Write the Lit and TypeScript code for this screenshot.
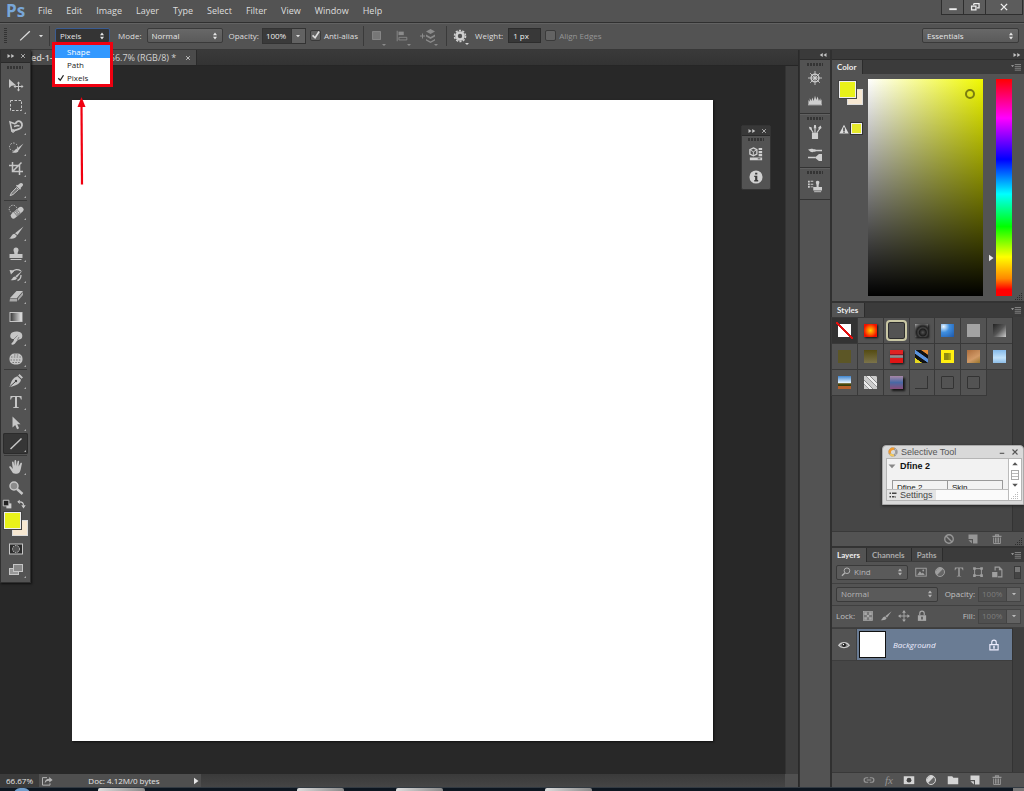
import { LitElement, html, svg, css, TemplateResult, nothing } from "lit";
import { customElement, state } from "lit/decorators.js";
import { classMap } from "lit/directives/class-map.js";

/* Glyphs share a 16x16 grid and take their colour from the text colour. */
const glyphs: Record<string, unknown> = {
  move: svg`<path d="M1 2v9l2.600-2.300L8 8.300z" fill="currentColor"/><path d="M10.500 5.500v8M6.500 9.500h8" stroke="currentColor"/><path d="M10.500 4.500l1.700 2H8.800zM10.500 14.500l1.700-2H8.800zM5.500 9.500l2-1.700v3.400zM15.500 9.500l-2-1.700v3.400z" fill="currentColor"/>`,
  marquee: svg`<rect x="2.500" y="2.500" width="11" height="10" fill="none" stroke="currentColor" stroke-dasharray="2.500 1.500"/>`,
  lasso: svg`<path d="M4 12.500L2 3l5.500 2" fill="none" stroke="currentColor" stroke-width="1.500"/><path d="M7.500 5C8 2 11 1.500 12.800 3c2 1.800 1.500 5-.8 6.500-2.500 1.600-5.500 1-8 3" fill="none" stroke="currentColor" stroke-width="1.800"/><path d="M6 7.500l3.500-1 2 .5" fill="none" stroke="currentColor" stroke-width="1.500"/><path d="M3.500 11c2-1.500 4 .8 2.500 2-1.200.8-2.500.3-2.500-2z" fill="none" stroke="currentColor"/>`,
  quick: svg`<circle cx="5.500" cy="7" r="4" fill="none" stroke="currentColor" stroke-dasharray="1.500 1.500"/><path d="M15.500 3.500l-5 7-2-1.500z" fill="currentColor"/><path d="M9 9l1.500 1.800c-.5 2-3.500 2.500-6.500 1.700C6.500 11.500 6.500 9 9 9z" fill="currentColor"/>`,
  crop: svg`<path d="M4.500 1v9.500H15M1 4.500h10.500V14M5 10l8.500-8.500" fill="none" stroke="currentColor" stroke-width="1.500"/>`,
  dropper: svg`<path d="M14.500 1.500c1 1 .5 2-.5 3L12.500 6l.5.800-1 .9-4-4 .9-.9.8.5 1.500-1.400c1-1 2.300-1.400 3.300-.4z" fill="currentColor"/><path d="M8.500 5.500l2 2-5.500 5-2.800 1.200L3.300 11z" fill="#777" stroke="currentColor"/>`,
  heal: svg`<circle cx="5" cy="5" r="3.800" fill="none" stroke="currentColor" stroke-dasharray="1.300 1.300"/><g transform="rotate(-40 9 8.500)"><rect x="1.500" y="6" width="15" height="5.500" rx="2.500" fill="currentColor"/><rect x="6.500" y="6" width="5" height="5.500" fill="#8d8d8d"/><path d="M7.500 7.500h1M9.500 7.500h1M7.500 9.500h1M9.500 9.500h1" stroke="#ddd"/></g>`,
  brush: svg`<path d="M15.500 1.500L9.500 10 7 8.200z" fill="currentColor"/><path d="M6.500 8.800l2.300 1.900c-.8 2.700-4 3.300-7.800 2.800 2.500-.7 2.300-4.500 5.500-4.700z" fill="currentColor"/>`,
  stamp: svg`<path d="M8 1.500a2.500 2.500 0 0 1 2.500 2.500c0 1.500-1 2-.8 4h4.800v4h-13V8h4.800c.2-2-.8-2.500-.8-4A2.500 2.500 0 0 1 8 1.500z" fill="currentColor"/><path d="M2.500 13.500h11" stroke="currentColor"/>`,
  history: svg`<path d="M14.500 3.500L9 10.500 7.300 9.200z" fill="currentColor"/><path d="M7 9.500l2 1.500c-.8 2-3 2.500-6.500 2 2.200-.6 2-3.500 4.500-3.500z" fill="currentColor"/><path d="M4 5.500c2-3.500 6-3.500 9-1.500M13 8c0 3-1.500 5-3.500 5.500" fill="none" stroke="currentColor" stroke-width="1.300"/><path d="M1.500 3l5 .5L3 7.500z" fill="currentColor"/>`,
  eraser: svg`<path d="M8.500 3H15l-6 7H2z" fill="currentColor"/><path d="M2 10.500h7v3H1.500zM9.800 10.500L15 4v3l-5.200 6z" fill="#a8a8a8"/>`,
  gradient: svg`<defs><linearGradient id="tool-fade"><stop offset="0" stop-color="#333"/><stop offset="1" stop-color="#eee"/></linearGradient></defs><rect x="2" y="3.500" width="12" height="9" fill="url(#tool-fade)" stroke="currentColor"/>`,
  smudge: svg`<path d="M2.500 4.500C3.500 2 7 1.200 10.500 1.800c3.200.6 4.500 3 3.500 6-.8 2-2.500 1.500-4 2.200-1.800 1.200-2 3.500-5 4.700-1.500.4-2.200-.7-1.200-1.700C5.500 11.500 6 10.500 6 9 3.500 9.500 1.500 7.500 2.500 4.500z" fill="currentColor"/><path d="M6 9l3.500-3.500M9.500 10l1.500-3" stroke="#888"/>`,
  sponge: svg`<rect x="1.500" y="2.500" width="13" height="11" rx="5" fill="currentColor"/><path d="M3 6h10M2.500 9h11M4.500 11.500h8M6 4h5" stroke="#777" stroke-dasharray="1.500 1.300"/>`,
  pen: svg`<path d="M11.500 1L15 4.500l-1.500 1.300-3.300-3.300z" fill="currentColor"/><path d="M9.500 3.200l3.500 3.500c-1 4-4 5.500-11.500 7.300C3 9 4.500 4.500 9.500 3.200z" fill="currentColor"/><path d="M2 13.500l5.500-5" stroke="#444"/><circle cx="8" cy="8" r="1.200" fill="#444"/>`,
  type: svg`<path d="M2.500 2h11l.3 3.500h-1C12.500 3.500 12 3 9 3v9.500c0 .5.500.8 2 1v.5H5v-.5c1.500-.2 2-.5 2-1V3C4 3 3.500 3.500 3.200 5.500h-1z" fill="currentColor"/>`,
  select: svg`<path d="M4.500 1.500v11l2.700-2.400 1.900 4.100 2-1-1.900-3.900h3.300z" fill="currentColor"/>`,
  line: svg`<path d="M2.500 13L13.500 2.500" stroke="currentColor" stroke-width="1.500"/>`,
  hand: svg`<path d="M4.500 8L4 3.500c0-1.300 1.500-1.300 1.700 0L6.300 7 6.500 2c0-1.300 1.700-1.300 1.700 0L8.500 7l1-4.500c.3-1.200 1.800-.9 1.600.3L10.600 7.500l1.800-3.200c.7-1 1.900-.4 1.500.7-1 3-1 9-4 9.500-3.500.6-5 .2-6-2L1.300 8.500C1 7.300 2 7 2.800 7.600L5 10z" fill="currentColor"/>`,
  zoom: svg`<circle cx="6" cy="6" r="4" fill="#8b8b8b" stroke="currentColor" stroke-width="1.500"/><path d="M9 9l5.500 5" stroke="currentColor" stroke-width="2.500"/>`,
  mask: svg`<rect x="1.500" y="3" width="13" height="10" fill="#2b2b2b" stroke="currentColor"/><circle cx="8" cy="8" r="3.500" fill="#555" stroke="currentColor" stroke-dasharray="1.500 1"/>`,
  screens: svg`<rect x="1.500" y="6.500" width="9" height="6" fill="#999" stroke="currentColor"/><rect x="5.500" y="2.500" width="9" height="7" fill="#888" stroke="currentColor"/>`,
  defaults: svg`<path d="M7 7h8v8H7z" fill="currentColor"/><path d="M2 2h9v9H2z" fill="#222" stroke="currentColor" stroke-width="1.500"/>`,
  swap: svg`<path d="M6 4.500c4 0 6 1.500 6 6" fill="none" stroke="currentColor" stroke-width="1.800"/><path d="M6 1v7L2 4.500zM8.500 10h7L12 15z" fill="currentColor"/>`,
  square: svg`<rect x="3" y="3" width="9" height="9" fill="#777" stroke="#8b8b8b"/>`,
  align: svg`<path d="M2.500 2v12" stroke="currentColor"/><path d="M4 3h6v4H4z" fill="currentColor"/><path d="M4.500 9.500h9v3h-9z" fill="none" stroke="currentColor"/>`,
  arrange: svg`<path d="M0 8h5M2.500 5.500v5" stroke="currentColor"/><path d="M10.500 1L15 3.500 10.500 6 6 3.500zM6 6.500L10.500 9 15 6.500v2L10.500 11 6 8.500zM6 11l4.500 2.500L15 11v1.500L10.500 15 6 12.500z" fill="currentColor"/>`,
  gear: svg`<circle cx="8" cy="8" r="4" fill="none" stroke="currentColor" stroke-width="3"/><circle cx="8" cy="8" r="6.300" fill="none" stroke="currentColor" stroke-width="1.800" stroke-dasharray="2.400 1.558"/>`,
  wheel: svg`<path d="M8 0v16M0 8h16M2.500 2.500l11 11M13.500 2.500l-11 11" stroke="currentColor"/><circle cx="8" cy="8" r="4.500" fill="none" stroke="currentColor" stroke-width="1.500"/><circle cx="8" cy="8" r="1.800" fill="currentColor"/>`,
  histogram: svg`<path d="M.5 13V8l1.500 2V6l2 3 1-4 1.500 4L8 3l1.500 5L11 4l1.500 5L14 6l.500 3 1-2v6z" fill="currentColor"/><path d="M0 13.500h16" stroke="currentColor"/>`,
  brushes: svg`<path d="M4.500 9h7v7h-7z" fill="currentColor"/><path d="M6 9L3 4M8 9V4M10 9l3.500-5" stroke="currentColor" stroke-width="1.300"/><path d="M1 2l3 .5.500 3L2 5zM7 0h2l.5 4h-3zM11.500 3l3-2.500 1 3-2.500 2z" fill="currentColor"/>`,
  presets: svg`<path d="M8 4h8M0 12h9" stroke="currentColor" stroke-width="1.800"/><path d="M0 3c2-.5 3-1 5-1 2.500 0 2.500 4 0 4C3 6 2 4 0 3zM6.500 2.500h2v3h-2zM9 11l3.500-3H16v8h-3.500L9 13z" fill="currentColor"/>`,
  clone: svg`<path d="M0 2h2v2H0zM3 2h3v1H3zM0 5h2v2H0zM3 5.500h3v1H3zM0 8h2v2H0zM3 8.500h3v1H3z" fill="currentColor"/><path d="M11 2c1.600 0 2 1 2 2s-1 2-.8 5H16v4H6V9h3.800C10 6 9 5 9 4s.4-2 2-2z" fill="currentColor"/><path d="M7 14.500h8" stroke="currentColor"/>`,
  properties: svg`<path d="M5 1l4 2v5L5 10 1 8V3z" fill="none" stroke="currentColor" stroke-width="1.500"/><path d="M1 3l4 2.500L9 3M5 5.500V10" stroke="currentColor" fill="none"/><path d="M11 1h4v2.500h-4zM11 4.500h4V7h-4zM11 8h4v2.500h-4zM1 12h14v3H1z" fill="currentColor"/><path d="M10 13.500h3" stroke="#444"/>`,
  info: svg`<circle cx="8" cy="8" r="7.500" fill="currentColor"/><path d="M7 3h2.500v2H7zM6 6.500h3.500v5h1V13H6v-1.500h1V8H6z" fill="#3a3a3a"/>`,
  warning: svg`<path d="M8 1l7.500 14H.5z" fill="currentColor"/><path d="M8 5.500V11M8 12v2" stroke="#222" stroke-width="2"/>`,
  menu: svg`<path d="M0 5h5L2.500 8z" fill="currentColor"/><path d="M6 4h10M6 7h10M6 10h10M6 13h10" stroke="currentColor"/>`,
  ban: svg`<circle cx="8" cy="8" r="5.700" fill="none" stroke="currentColor" stroke-width="1.800"/><path d="M4 4l8 8" stroke="currentColor" stroke-width="1.800"/>`,
  page: svg`<path d="M2 2h12v12H8V8H2z" fill="currentColor"/><path d="M2 9.500h4.500V14z" fill="currentColor"/>`,
  trash: svg`<path d="M2 4.500h12M6 4V2.500h4V4" fill="none" stroke="currentColor" stroke-width="1.500"/><path d="M3.500 6v8h9V6M6 6v7M8 6v7M10 6v7" fill="none" stroke="currentColor" stroke-width="1.300"/>`,
  picture: svg`<rect x="1" y="3" width="14" height="10.500" fill="none" stroke="currentColor" stroke-width="1.300"/><path d="M3 12l3.500-5 2.500 3 1.500-1.500L13 12z" fill="currentColor"/><circle cx="11" cy="6" r="1.200" fill="currentColor"/>`,
  adjust: svg`<circle cx="8" cy="8" r="6" fill="#666" stroke="currentColor" stroke-width="1.300"/><path d="M12.200 3.800A6 6 0 0 0 3.800 12.200z" fill="currentColor"/>`,
  shape: svg`<path d="M3.500 3.500h9v9h-9z" fill="none" stroke="currentColor" stroke-width="1.300"/><path d="M1.500 1.500h3.500v3.500H1.500zM11 1.500h3.500v3.500H11zM1.500 11h3.500v3.500H1.500zM11 11h3.500v3.500H11z" fill="currentColor"/>`,
  smart: svg`<path d="M5.500 6V1.500H11l3.500 3.500v9.500H9" fill="none" stroke="currentColor" stroke-width="1.500"/><path d="M10.500 1.500V5.500h4zM1.500 8h7v7h-7z" fill="currentColor"/>`,
  search: svg`<circle cx="9.500" cy="6" r="4.500" fill="none" stroke="currentColor" stroke-width="1.500"/><path d="M6 9.500L1.500 14" stroke="currentColor" stroke-width="2"/>`,
  checker: svg`<rect x="2" y="2" width="12" height="12" fill="#777" stroke="currentColor"/><path d="M3 3h3.500v3.500H3zM9.500 3H13v3.500H9.500zM6.500 6.500h3v3h-3zM3 9.500h3.500V13H3zM9.500 9.500H13V13H9.500z" fill="currentColor"/>`,
  cross: svg`<path d="M8 2v12M2 8h12" stroke="currentColor" stroke-width="1.200"/><path d="M8 0l2.500 3.500h-5zM8 16l2.500-3.500h-5zM0 8l3.500-2.500v5zM16 8l-3.500-2.500v5z" fill="currentColor"/>`,
  lock: svg`<path d="M5 7V4.500a3 3 0 0 1 6 0V7" fill="none" stroke="currentColor" stroke-width="1.500"/><path d="M2.500 7h11v7.500h-11z" fill="currentColor"/><path d="M8 9v3.500" stroke="#444" stroke-width="1.800"/>`,
  lockLine: svg`<path d="M5 7V4.500a3 3 0 0 1 6 0V7" fill="none" stroke="currentColor" stroke-width="1.500"/><path d="M2.500 7.500h11v7h-11z" fill="none" stroke="currentColor" stroke-width="1.500"/><path d="M8 9v4" stroke="currentColor" stroke-width="2"/>`,
  eye: svg`<path d="M1 8.500C4 3.500 12 3.500 15 8.500c-3 4-11 4-14 0z" fill="#777" stroke="currentColor" stroke-width="1.600"/><circle cx="8" cy="8" r="2.700" fill="#222"/><circle cx="7.300" cy="7.300" r=".9" fill="#fff"/>`,
  link: svg`<path d="M7 5H4.500a3 3 0 0 0 0 6H7M9 5h2.500a3 3 0 0 1 0 6H9M5 8h6" fill="none" stroke="currentColor" stroke-width="1.600"/>`,
  addMask: svg`<path d="M1 3h14v10.500H1z" fill="currentColor"/><circle cx="8" cy="8.200" r="3.200" fill="#444"/>`,
  folder: svg`<path d="M1 3h6l1.500 2H15v8.500H1z" fill="currentColor"/>`,
  share: svg`<path d="M8 3.500H2v10h10V11" fill="none" stroke="currentColor" stroke-width="1.300"/><path d="M5 11c0-4 2-6 6-6V2.500L15.500 6.500 11 10V7.500C8 7.500 6.500 8.500 5 11z" fill="currentColor"/>`,
  forward: svg`<path d="M1 4l6 4-6 4zM8.500 4l6 4-6 4z" fill="currentColor"/>`,
  back: svg`<path d="M7.500 4l-6 4 6 4zM15 4L9 8l6 4z" fill="currentColor"/>`,
  close: svg`<path d="M3 3l10 10M13 3L3 13" stroke="currentColor" stroke-width="2.200"/>`,
  minimize: svg`<path d="M2 10h12v3H2z" fill="currentColor"/>`,
  restore: svg`<path d="M6 2.500h8.500v7H11M6 5V2.500" fill="none" stroke="currentColor" stroke-width="2"/><path d="M2.500 6.500h7v6h-7z" fill="none" stroke="currentColor" stroke-width="2"/>`,
  updown: svg`<path d="M8 1l4 5.500H4zM8 15l4-5.500H4z" fill="currentColor"/>`,
  down: svg`<path d="M2.500 5.500h11L8 11.500z" fill="currentColor"/>`,
  up: svg`<path d="M2.500 10.500h11L8 4.500z" fill="currentColor"/>`,
  play: svg`<path d="M4 1.500l9 6.500-9 6.500z" fill="currentColor"/>`,
  check: svg`<path d="M2.500 8.500l4 4L13 2.500" fill="none" stroke="currentColor" stroke-width="2.600"/>`,
  resize: svg`<path d="M12 2h2v2h-2zM8 6h2v2H8zM12 6h2v2h-2zM4 10h2v2H4zM8 10h2v2H8zM12 10h2v2h-2zM0 14h2v2H0zM4 14h2v2H4zM8 14h2v2H8zM12 14h2v2h-2z" fill="currentColor"/>`,
  list: svg`<path d="M1 3h3v3H1zM1 10h3v3H1zM6 3h9v3H6zM6 10h5v3H6zM12 11h2v2h-2z" fill="currentColor"/>`,
  ring: svg`<circle cx="8" cy="8" r="5.500" fill="none" stroke="#9a9a9a" stroke-width="4" stroke-dasharray="3.500 .8"/><path d="M3 10a5.500 5.500 0 0 1 7-7" fill="none" stroke="#f29a2e" stroke-width="4"/><path d="M3.500 11a5.500 5.500 0 0 0 6 2.300" fill="none" stroke="#f5c95a" stroke-width="3.500"/>`,
};

const icon = (name: string, size = "s12"): TemplateResult =>
  html`<svg class="icon ${size}" viewBox="0 0 16 16" aria-hidden="true">${glyphs[name]}</svg>`;

const menus = ["File", "Edit", "Image", "Layer", "Type", "Select", "Filter", "View", "Window", "Help"];

const toolGroups: [string, string][][] = [
  [["move", "Move"], ["marquee", "Marquee"], ["lasso", "Lasso"], ["quick", "Quick selection"], ["crop", "Crop"], ["dropper", "Eyedropper"]],
  [["heal", "Healing brush"], ["brush", "Brush"], ["stamp", "Clone stamp"], ["history", "History brush"], ["eraser", "Eraser"], ["gradient", "Gradient"], ["smudge", "Smudge"], ["sponge", "Sponge"]],
  [["pen", "Pen"], ["type", "Type"], ["select", "Path selection"], ["line", "Line"]],
  [["hand", "Hand"], ["zoom", "Zoom"]],
];

const dockGroups: [string, string][][] = [
  [["wheel", "Navigator"], ["histogram", "Histogram"]],
  [["brushes", "Brush presets"], ["presets", "Brush"]],
  [["clone", "Clone source"]],
];

const styleNames = [
  "none", "sun", "ring", "chrome", "glass", "flat", "steel",
  "moss", "olive", "ruby", "camo", "gold", "copper", "sky",
  "scene", "static", "dusk", "plain", "frame", "frame",
];

@customElement("app-root")
export class AppRoot extends LitElement {
  static styles = css`
    :host { display: flex; flex-direction: column; height: 100vh; overflow: hidden; position: relative;
      background: #535353; color: #dedede; font: 8px/12px "Open Sans", "Noto Sans", sans-serif; }
    * { box-sizing: border-box; }
    button, input, select { font: inherit; color: inherit; background: none; border: 0; padding: 0; margin: 0; border-radius: 0; }
    button { display: flex; align-items: center; justify-content: center; }
    .icon { display: block; flex: none; overflow: visible; }
    .s6 { width: 6px; height: 6px; } .s8 { width: 8px; height: 8px; } .s10 { width: 10px; height: 10px; }
    .s12 { width: 12px; height: 12px; } .s14 { width: 14px; height: 14px; } .s16 { width: 16px; height: 16px; }

    .menubar { display: flex; align-items: center; height: 23px; flex: none; border-bottom: 1px solid #303030; padding-left: 6px; font-size: 9px; }
    .logo { font: 700 17px/22px "Open Sans", sans-serif; color: #78a6d8; width: 26px; }
    .menubar nav { display: flex; gap: 14px; padding-left: 6px; flex: 1; }
    .window-buttons { display: flex; align-self: flex-start; height: 15px; border: 1px solid #2e2e2e; border-top: 0; margin-right: 1px; color: #eee; background: #5c5c5c; }
    .window-buttons button { width: 22px; border-right: 1px solid #2e2e2e; }
    .window-buttons button:last-child { width: 36px; border: 0; }

    .options { display: flex; align-items: center; height: 27px; flex: none; border-top: 1px solid #626262; border-bottom: 1px solid #383838; padding: 0 5px 2px 4px; }
    .v-grip { width: 3px; height: 16px; margin-right: 11px; background: repeating-linear-gradient(#333 0 1px, #535353 1px 2px); }
    .rule { width: 1px; height: 20px; background: #3a3a3a; margin: 0 5px; }
    .tool-preset { gap: 6px; width: 26px; }
    .combo { display: flex; align-items: center; height: 15px; padding: 0 3px 0 4px; border: 1px solid #3a3a3a; border-radius: 2px; background: linear-gradient(#686868, #5a5a5a); color: #e6e6e6; }
    .combo select { appearance: none; flex: 1; min-width: 0; outline: none; line-height: 12px; }
    .combo .icon { pointer-events: none; }
    .combo.focused { background: #343434; border-color: #3b5c91; width: 55px; margin-right: 8px; }
    .mode-combo { width: 76px; margin: 0 6px 0 5px; }
    .number { display: flex; height: 16px; border: 1px solid #333; margin-left: 3px; }
    .number input { width: 28px; background: #3a3a3a; padding-left: 3px; outline: none; color: #eee; }
    .number button { width: 14px; background: #626262; border-left: 1px solid #333; }
    .check { display: flex; align-items: center; gap: 3px; margin-left: 4px; position: relative; }
    .check input { appearance: none; width: 11px; height: 11px; border: 1px solid #3a3a3a; border-radius: 2px; background: #636363; }
    .check .icon { position: absolute; left: 1px; top: 0; display: none; }
    .check input:checked + .icon { display: block; }
    .disabled { color: #969696; }
    .shape-actions { display: flex; gap: 11px; padding: 0 5px 0 1px; color: #8b8b8b; }
    .shape-actions button, .gear { position: relative; }
    .shape-actions button::after, .gear::after { content: ""; position: absolute; right: -2px; bottom: -2px; border: 2px solid transparent; border-top-color: currentColor; border-bottom: 0; }
    .gear { color: #d0d0d0; margin: 0 8px 0 1px; }
    .weight { width: 33px; height: 15px; background: #383838; border: 1px solid #2d2d2d; padding-left: 4px; margin-left: 5px; color: #eee; }
    .workspace-combo { width: 97px; margin-left: auto; }

    .workspace { display: flex; flex: 1; min-height: 0; position: relative; }
    .document { display: flex; flex-direction: column; flex: 1; min-width: 0; border-right: 1px solid #2a2a2a; }
    .tabs { display: flex; height: 16px; flex: none; background: linear-gradient(#3a3a3a, #333); border-bottom: 1px solid #262626; }
    .doc-tab { display: flex; align-items: center; width: 197px; background: #4b4b4b; padding: 0 5px 0 31px; font-size: 9px; color: #d2d2d2; border-right: 1px solid #2a2a2a; font-weight: 600; }
    .doc-tab span { flex: none; } .doc-tab .zoom-note { margin-left: 57px; flex: 1; font-weight: 400; white-space: nowrap; }
    .view { display: flex; flex: 1; min-height: 0; }
    .pasteboard { display: flex; flex: 1; background: #282828; padding: 34px 72px 33px; }
    .paper { flex: 1; background: #fff; box-shadow: 1px 1px 2px #111; }
    .scroll { width: 12px; flex: none; background: #3e3e3e; border-left: 1px solid #333; }
    .view .scroll { width: 13px; }
    .status { display: flex; height: 13px; flex: none; background: linear-gradient(#3a3a3a, #454545); color: #e4e4e4; align-items: stretch; }
    .status .level { width: 39px; background: #3b3b3b; padding-left: 6px; outline: none; }
    .status .doc { display: flex; align-items: center; width: 162px; background: #4f4f4f; padding: 0 1px 0 2px; }
    .status .doc > .icon { color: #b5b5b5; }
    .status .doc span { flex: 1; text-align: center; padding-left: 3px; }
    .status .corner { width: 13px; background: #505050; margin-left: auto; }

    .dock { display: flex; flex-direction: column; width: 31px; flex: none; border-left: 1px solid #303030; background: #535353; }
    .bar { display: flex; align-items: center; justify-content: flex-end; height: 10px; flex: none; background: #3a3a3a; color: #c5c5c5; padding: 0 3px; border-bottom: 1px solid #2c2c2c; }
    .dock-group { display: flex; flex-direction: column; align-items: center; gap: 8px; padding: 3px 0 6px; border-bottom: 1px solid #333; color: #cfcfcf; }
    .dock-group + .dock-group { border-top: 1px solid #606060; padding-top: 2px; }
    .grip { width: 16px; height: 3px; background: repeating-linear-gradient(90deg, #343434 0 2px, #535353 2px 3px); }
    .dock-group .grip { margin-bottom: -3px; }

    .panels { display: flex; flex-direction: column; width: 194px; flex: none; border-left: 2px solid #303030; }
    .panel-tabs { display: flex; height: 14px; flex: none; background: #3b3b3b; font-family: Lato, sans-serif; font-weight: 700; color: #aaa; }
    .panel-tabs button { padding: 0 6px 0 5px; border-right: 1px solid #2c2c2c; background: #444; height: 13px; }
    .panel-tabs button.active { background: #535353; color: #eee; height: 14px; }
    .panel-tabs .icon { margin: 2px 3px 0 auto; color: #aaa; }
    .color { display: flex; height: 229px; flex: none; padding: 5px 12px 0 7px; border-bottom: 2px solid #333; position: relative; }
    .color-left { width: 29px; }
    .pair { display: grid; grid-template: 8px 9px 7px / 8px 9px 7px; }
    .front { grid-area: 1 / 1 / 3 / 3; background: #e9f21a; border: 1px solid #eee; outline: 1px solid #444; z-index: 1; padding: 0; }
    .rear { grid-area: 2 / 2 / 4 / 4; background: #f7e8d2; border: 1px solid #ddd; }
    .color .pair { margin-top: 2px; }
    .gamut { display: flex; align-items: center; gap: 2px; margin-top: 18px; color: #ddd; }
    .gamut i { width: 11px; height: 11px; background: #e6ea2c; border: 1px solid #eee; outline: 1px solid #333; }
    .field { flex: 1; height: 217px; position: relative; background: linear-gradient(transparent, #000), linear-gradient(90deg, #fff, #f0f800); }
    .marker { position: absolute; right: 8px; top: 10px; width: 10px; height: 10px; border: 2px solid #7a7d10; border-radius: 50%; }
    .hue-gap { display: flex; justify-content: flex-end; width: 13px; padding: 175px 1px 0 0; color: #eee; }
    .hue { width: 16px; height: 217px; background: linear-gradient(#f00, #f0f 18%, #00f 37%, #0ff 53%, #0f0 68%, #ff0 82%, #f80 92%, #f00 97%); }
    .corner-grip { position: absolute; right: 1px; bottom: 1px; color: #2e2e2e; }
    .styles { display: flex; flex: 1; min-height: 0; background: #464646; }
    .style-grid { display: grid; grid-template-columns: repeat(7, 1fr); grid-auto-rows: 25px; gap: 1px; flex: 1; align-content: start; padding-top: 1px; }
    .style-grid button { background: #535353; box-shadow: 0 0 0 1px #393939; }
    .style-grid button:first-child { background: #333; }
    .sw { width: 13px; height: 13px; display: block; }
    .sw-none { background: #fff; position: relative; }
    .sw-none::after { content: ""; position: absolute; inset: -2px; background: linear-gradient(45deg, transparent 46%, #e01010 46% 54%, transparent 54%); }
    .sw-sun { background: radial-gradient(#ffd000, #ff6a00 40%, #f01000 75%); box-shadow: 1px 1px 2px #111; }
    .sw-ring { width: 17px; height: 17px; border: 1px solid #2c2c2c; border-radius: 2px; outline: 2px solid #c9c7a4; }
    .sw-chrome { background: radial-gradient(circle at 60% 65%, #555, #1c1c1c 30%, #444 40%, #222 55%, #aaa); box-shadow: 1px 1px 2px #111; }
    .sw-glass { background: radial-gradient(circle at 20% 20%, #eaf6ff, #3f8fe0 40%, #1d56a8); }
    .sw-flat { background: #a3a3a3; }
    .sw-steel { background: linear-gradient(135deg, #222, #555 50%, #ccc); }
    .sw-moss { background: #5c5626; } .sw-olive { background: linear-gradient(#544b12, #7b734a); }
    .sw-ruby { background: linear-gradient(#e02222 30%, #812 35%, #999 45%, #777 60%, #e01515 65%); box-shadow: 1px 1px 2px #111; }
    .sw-camo { background: linear-gradient(35deg, #e8da20 22%, #111 24% 40%, #5b93dd 44% 58%, #111 62% 76%, #e28b35 80%); }
    .sw-gold { background: linear-gradient(90deg, #8d8a10 50%, #b9b410); border: 3px solid #ffee10; }
    .sw-copper { background: linear-gradient(150deg, #ab6d3c, #d19a68 60%, #98752c); }
    .sw-sky { background: linear-gradient(#85b9e8, #c2e2fa 60%, #8dbde8); }
    .sw-scene { background: linear-gradient(#3f84cc, #dff0ff 50%, #5c5210 60%, #2d3b10 75%, #b5602c 80%); }
    .sw-static { background: repeating-linear-gradient(45deg, #ccc 0 3px, #999 3px 4px, #eee 4px 6px, #888 6px 7px); }
    .sw-dusk { background: linear-gradient(#a887a6, #4968a4 50%, #8a4e7a); box-shadow: 2px 2px 2px #151515; }
    .sw-plain { border-right: 1px solid #333; border-bottom: 1px solid #333; }
    .sw-frame { border: 1px solid #333; border-radius: 1px; }
    .footer { display: flex; align-items: center; justify-content: flex-end; gap: 12px; height: 15px; flex: none; padding: 0 21px; border-top: 1px solid #393939; color: #969696; position: relative; }
    .layer-footer { gap: 10px; }
    .fx { font: italic 11px/12px "Liberation Serif", serif; }
    .lit { color: #d4d4d4; }
    .gap-line { height: 2px; flex: none; background: #333; }
    .row { display: flex; align-items: center; height: 22px; flex: none; border-bottom: 1px solid #404040; padding: 0 3px 1px 4px; color: #c0c0c0; }
    .row .combo { color: #b5b5b5; background: #5a5a5a; }
    .kind-combo { width: 72px; margin-right: 7px; gap: 3px; }
    .filters { display: flex; flex: 1; gap: 7px; color: #9f9f9f; }
    .toggle { width: 7px; height: 13px; border: 1px solid #3a3a3a; background: linear-gradient(#777 50%, #444 50%); }
    .blend-combo { flex: 1; margin-right: 7px; }
    .row .number { height: 15px; border-color: #444; }
    .row .number input { background: #505050; color: #7d7d7d; width: 27px; }
    .row .number button { border-color: #444; color: #bbb; }
    .locks { display: flex; align-items: center; gap: 6px; flex: 1; margin-left: 7px; color: #a8a8a8; }
    .layer-area { display: flex; height: 144px; flex: none; background: #464646; }
    .layers { flex: 1; }
    .layer { display: flex; height: 33px; border-top: 1px solid #3d3d3d; border-bottom: 1px solid #3d3d3d; background: #535353; }
    .layer .eye { width: 24px; color: #ccc; }
    .layer-main { display: flex; align-items: center; flex: 1; background: #6a7c94; padding: 0 12px 0 3px; border-left: 1px solid #404040; color: #eef; font-style: italic; }
    .thumb { width: 25px; height: 25px; background: #fff; outline: 1px solid #111; margin-right: 8px; }
    .layer-main .name { flex: 1; }

    .taskbar { display: flex; height: 4px; flex: none; background: #0d1620; border-top: 1px solid #323a42; overflow: hidden; }
    .orb { width: 16px; height: 12px; margin-left: 14px; border-radius: 8px; background: #6f9ccc; }
    .task { width: 47px; height: 8px; background: linear-gradient(90deg, #ddd, #888); border-radius: 2px; }
    .gap-s { margin-left: 52px; } .gap-m { margin-left: 68px; } .gap-l { margin-left: 102px; } .gap-xl { margin-left: 152px; }
    .peek { width: 11px; background: #777; margin-left: auto; }

    /* Palettes and callouts that float over the work area. */
    .toolbox { position: absolute; left: 0; top: 0; width: 31px; background: #535353; border: 1px solid #303030; border-top: 0; box-shadow: 1px 1px 2px #111; padding-bottom: 2px; z-index: 2; }
    .palette-bar { display: flex; align-items: center; justify-content: space-between; height: 13px; padding: 0 4px 0 6px; background: #383838; border-bottom: 1px solid #2a2a2a; color: #c5c5c5; }
    .toolbox .grip { margin: 3px 6px 5px; }
    .tool { width: 25px; height: 21px; margin: 0 2px; color: #c6c6c6; position: relative; border-radius: 2px; }
    .tool.more::after { content: ""; position: absolute; right: 2px; bottom: 2px; border: 1px solid #aaa; border-top-color: transparent; border-left-color: transparent; }
    .tool.active { background: #363636; box-shadow: inset 0 0 0 1px #2b2b2b; }
    .toolbox hr { border: 0; height: 1px; margin: 0 3px; background: #3a3a3a; }
    .toolbox hr:last-of-type { margin-top: 1px; }
    .mini { display: flex; justify-content: space-between; height: 12px; padding: 0 4px 0 1px; color: #ccc; align-items: center; }
    .toolbox .pair { margin: 2px 0 2px 3px; }

    .float { position: absolute; right: 253px; top: 75px; width: 30px; background: #535353; border: 1px solid #333; border-radius: 2px; color: #d0d0d0; }
    .float .palette-bar { height: 10px; padding: 0 3px 0 6px; }
    .float-body { display: flex; flex-direction: column; align-items: center; gap: 9px; padding: 2px 0 5px; }
    .float-body .grip { margin-bottom: -3px; }

    .menu { position: absolute; left: 52px; top: 42px; width: 61px; margin: 0; padding: 0; list-style: none; background: #fff; border: 3px solid #f00010; color: #222; z-index: 3; }
    .menu li { display: flex; align-items: center; gap: 2px; height: 13px; padding-left: 12px; }
    .menu li.hot { background: #3399ff; color: #fff; }
    .menu li.checked { padding-left: 2px; }
    .arrow { position: absolute; left: 76px; top: 96px; width: 12px; height: 90px; z-index: 3; }

    .window { position: absolute; right: 0; top: 395px; width: 142px; height: 60px; display: flex; flex-direction: column; padding: 0 1px 3px 3px; background: #d9d9d9; border: 1px solid #aaa; border-radius: 4px 4px 0 0; color: #444; font-family: "Liberation Sans", sans-serif; box-shadow: 0 1px 3px #222; z-index: 2; }
    .window-title { display: flex; align-items: center; gap: 3px; height: 12px; padding: 0 3px 0 2px; font-size: 9px; color: #555; }
    .window-title span { flex: 1; }
    .window-title button { margin-left: 3px; }
    .window-body { display: flex; flex: 1; min-height: 0; background: #f2f2f2; border: 1px solid #b5b5b5; color: #111; }
    .window-main { flex: 1; display: flex; flex-direction: column; min-width: 0; overflow: hidden; }
    .window-head { display: flex; align-items: center; gap: 3px; height: 14px; font-size: 9px; font-weight: 700; }
    .window-head .icon { color: #888; }
    .window-list { width: auto; margin: 8px 5px 0 5px; height: 9px; overflow: hidden; display: flex; border-top: 1px solid #999; border-left: 1px solid #999; }
    .window-list button { align-items: flex-start; justify-content: flex-start; flex: 1; padding-left: 4px; line-height: 13px; font-size: 8px; border-right: 1px solid #999; }
    .window-foot { display: flex; align-items: center; height: 11px; background: #fafafa; border-top: 1px solid #bbb; font-size: 9px; color: #444; margin-top: auto; }
    .window-foot button { gap: 3px; padding: 0 3px 0 2px; height: 10px; background: #e4e4e4; }
    .window-scroll { display: flex; flex-direction: column; align-items: center; justify-content: space-between; width: 13px; border-left: 1px solid #bbb; background: #fff; color: #555; padding: 1px 0; }
    .window-scroll i { width: 8px; height: 10px; border: 1px solid #aaa; background: repeating-linear-gradient(#fff 0 2px, #bbb 2px 3px); }
    .window-scroll .icon:last-child { color: #bbb; }
  `;

  @state() private activeTool = "line";

  private combo(label: string, options: string[], cls: string, before: unknown = nothing) {
    return html`<div class="combo ${cls}">${before}<select aria-label=${label}>${options.map((o) => html`<option>${o}</option>`)}</select>${icon("updown", "s8")}</div>`;
  }

  private amount(id: string, value: string) {
    return html`<div class="number"><input id=${id} .value=${value} /><button aria-label="Open slider">${icon("down", "s6")}</button></div>`;
  }

  private tool([name, label]: [string, string]) {
    const classes = { tool: true, more: name !== "move" && name !== "zoom", active: name === this.activeTool };
    return html`<button class=${classMap(classes)} aria-label=${label} @click=${() => (this.activeTool = name)}>${icon(name, "s16")}</button>`;
  }

  private pair() {
    return html`<div class="pair"><button class="front" aria-label="Foreground colour"></button><button class="rear" aria-label="Background colour"></button></div>`;
  }

  private panelTabs(names: string[]) {
    return html`<div class="panel-tabs">${names.map((n, i) => html`<button class=${i === 0 ? "active" : ""}>${n}</button>`)}${icon("menu", "s10")}</div>`;
  }

  private optionBar() {
    return html`<div class="options">
      <span class="v-grip"></span>
      <button class="tool-preset" aria-label="Tool preset">${icon("line", "s14")}${icon("down", "s6")}</button>
      <span class="rule"></span>
      ${this.combo("Tool mode", ["Pixels", "Shape", "Path"], "focused")}
      <label for="mode">Mode:</label>
      <div class="combo mode-combo"><select id="mode"><option>Normal</option></select>${icon("updown", "s8")}</div>
      <label for="opacity">Opacity:</label>${this.amount("opacity", "100%")}
      <label class="check"><input type="checkbox" checked />${icon("check", "s10")}Anti-alias</label>
      <span class="rule"></span>
      <div class="shape-actions">
        <button aria-label="Path operations">${icon("square", "s14")}</button>
        <button aria-label="Path alignment">${icon("align", "s14")}</button>
        <button aria-label="Path arrangement">${icon("arrange", "s16")}</button>
      </div>
      <span class="rule"></span>
      <button class="gear" aria-label="Line settings">${icon("gear", "s14")}</button>
      <label for="weight">Weight:</label><input id="weight" class="weight" .value=${"1 px"} />
      <label class="check disabled"><input type="checkbox" disabled />Align Edges</label>
      ${this.combo("Workspace", ["Essentials"], "workspace-combo")}
    </div>`;
  }

  private toolbox() {
    return html`<aside class="toolbox">
      <div class="palette-bar">${icon("forward", "s8")}${icon("close", "s6")}</div>
      <div class="grip"></div>
      ${toolGroups.map((g, i) => html`${i ? html`<hr />` : nothing}${g.map((t) => this.tool(t))}`)}
      <div class="mini"><button aria-label="Default colours">${icon("defaults", "s10")}</button><button aria-label="Swap colours">${icon("swap", "s10")}</button></div>
      ${this.pair()}
      <button class="tool" aria-label="Quick mask">${icon("mask", "s16")}</button>
      <button class="tool more" aria-label="Screen mode">${icon("screens", "s16")}</button>
    </aside>`;
  }

  private panels() {
    return html`<div class="panels">
      <div class="bar">${icon("forward", "s8")}</div>
      ${this.panelTabs(["Color"])}
      <section class="color">
        <div class="color-left">${this.pair()}<div class="gamut">${icon("warning", "s10")}<i></i></div></div>
        <div class="field"><span class="marker"></span></div>
        <div class="hue-gap">${icon("play", "s8")}</div>
        <div class="hue"></div>
        <span class="corner-grip">${icon("resize", "s8")}</span>
      </section>
      ${this.panelTabs(["Styles"])}
      <section class="styles">
        <div class="style-grid">${styleNames.map((n) => html`<button aria-label="${n} style"><span class="sw sw-${n}"></span></button>`)}</div>
        <div class="scroll"></div>
      </section>
      <div class="footer">
        <button aria-label="Clear style">${icon("ban")}</button><button aria-label="New style">${icon("page")}</button><button aria-label="Delete style">${icon("trash")}</button>
        <span class="corner-grip">${icon("resize", "s8")}</span>
      </div>
      <div class="gap-line"></div>
      ${this.panelTabs(["Layers", "Channels", "Paths"])}
      <div class="row">
        ${this.combo("Filter kind", ["Kind"], "kind-combo", icon("search", "s10"))}
        <div class="filters">${[["picture", "Pixel"], ["adjust", "Adjustment"], ["type", "Type"], ["shape", "Shape"], ["smart", "Smart object"]].map(([n, l]) => html`<button aria-label="${l} layers">${icon(n, "s12")}</button>`)}</div>
        <button class="toggle" aria-label="Toggle filter"></button>
      </div>
      <div class="row">
        ${this.combo("Blend mode", ["Normal"], "blend-combo")}
        <label for="layer-opacity">Opacity:</label>${this.amount("layer-opacity", "100%")}
      </div>
      <div class="row">
        Lock:
        <div class="locks">${[["checker", "transparency"], ["brush", "pixels"], ["cross", "position"], ["lock", "all"]].map(([n, l]) => html`<button aria-label="Lock ${l}">${icon(n, "s12")}</button>`)}</div>
        <label for="fill">Fill:</label>${this.amount("fill", "100%")}
      </div>
      <section class="layer-area">
        <div class="layers">
          <div class="layer">
            <button class="eye" aria-label="Layer visibility">${icon("eye")}</button>
            <div class="layer-main"><span class="thumb"></span><span class="name">Background</span>${icon("lockLine")}</div>
          </div>
        </div>
        <div class="scroll"></div>
      </section>
      <div class="footer layer-footer">
        <button aria-label="Link layers">${icon("link")}</button>
        <button class="fx" aria-label="Layer effects">fx</button>
        <button class="lit" aria-label="Add mask">${icon("addMask")}</button>
        <button class="lit" aria-label="Adjustment layer">${icon("adjust")}</button>
        <button class="lit" aria-label="New group">${icon("folder")}</button>
        <button class="lit" aria-label="New layer">${icon("page")}</button>
        <button aria-label="Delete layer">${icon("trash")}</button>
      </div>
    </div>`;
  }

  private pluginWindow() {
    return html`<section class="window">
      <div class="window-title">${icon("ring", "s10")}<span>Selective Tool</span><button aria-label="Minimise">${icon("minimize", "s6")}</button><button aria-label="Close">${icon("close", "s8")}</button></div>
      <div class="window-body">
        <div class="window-main">
          <div class="window-head">${icon("down", "s10")}Dfine 2</div>
          <div class="window-list"><button>Dfine 2</button><button>Skin</button></div>
          <div class="window-foot"><button>${icon("list", "s8")}Settings</button></div>
        </div>
        <div class="window-scroll">${icon("up", "s8")}<i></i>${icon("down", "s8")}${icon("resize", "s8")}</div>
      </div>
    </section>`;
  }

  render() {
    return html`
      <header class="menubar">
        <span class="logo">Ps</span>
        <nav>${menus.map((m) => html`<button>${m}</button>`)}</nav>
        <div class="window-buttons"><button aria-label="Minimise">${icon("minimize", "s10")}</button><button aria-label="Restore">${icon("restore", "s10")}</button><button aria-label="Close">${icon("close", "s10")}</button></div>
      </header>
      ${this.optionBar()}
      <main class="workspace">
        <div class="document">
          <div class="tabs"><div class="doc-tab"><span>ed-1-</span><span class="zoom-note">66.7% (RGB/8) *</span><button aria-label="Close document">${icon("close", "s6")}</button></div></div>
          <div class="view"><div class="pasteboard"><div class="paper"></div></div><div class="scroll"></div></div>
          <div class="status">
            <input class="level" aria-label="Zoom level" .value=${"66.67%"} />
            <div class="doc">${icon("share", "s12")}<span>Doc: 4.12M/0 bytes</span><button aria-label="Status menu">${icon("play", "s8")}</button></div>
            <div class="corner"></div>
          </div>
        </div>
        <div class="dock">
          <div class="bar">${icon("back", "s8")}</div>
          ${dockGroups.map((g) => html`<div class="dock-group"><span class="grip"></span>${g.map(([n, l]) => html`<button aria-label=${l}>${icon(n, "s14")}</button>`)}</div>`)}
        </div>
        ${this.panels()}
        ${this.toolbox()}
        <aside class="float">
          <div class="palette-bar">${icon("forward", "s8")}${icon("close", "s6")}</div>
          <div class="float-body"><span class="grip"></span><button aria-label="Properties">${icon("properties", "s14")}</button><button aria-label="Info">${icon("info", "s14")}</button></div>
        </aside>
        ${this.pluginWindow()}
      </main>
      <footer class="taskbar"><span class="orb"></span><span class="task gap-m"></span><span class="task gap-xl"></span><span class="task gap-s"></span><span class="task gap-l"></span><span class="peek"></span></footer>
      <ul class="menu" role="listbox" aria-label="Tool mode choices">
        <li class="hot" role="option">Shape</li>
        <li role="option">Path</li>
        <li class="checked" role="option" aria-selected="true">${icon("check", "s8")}Pixels</li>
      </ul>
      <svg class="arrow" viewBox="0 0 12 90" aria-hidden="true"><path d="M5.500 8L6 88.500" stroke="#f00010" stroke-width="2.200"/><path d="M5.500 1L9.500 11h-8z" fill="#f00010"/></svg>`;
  }
}
